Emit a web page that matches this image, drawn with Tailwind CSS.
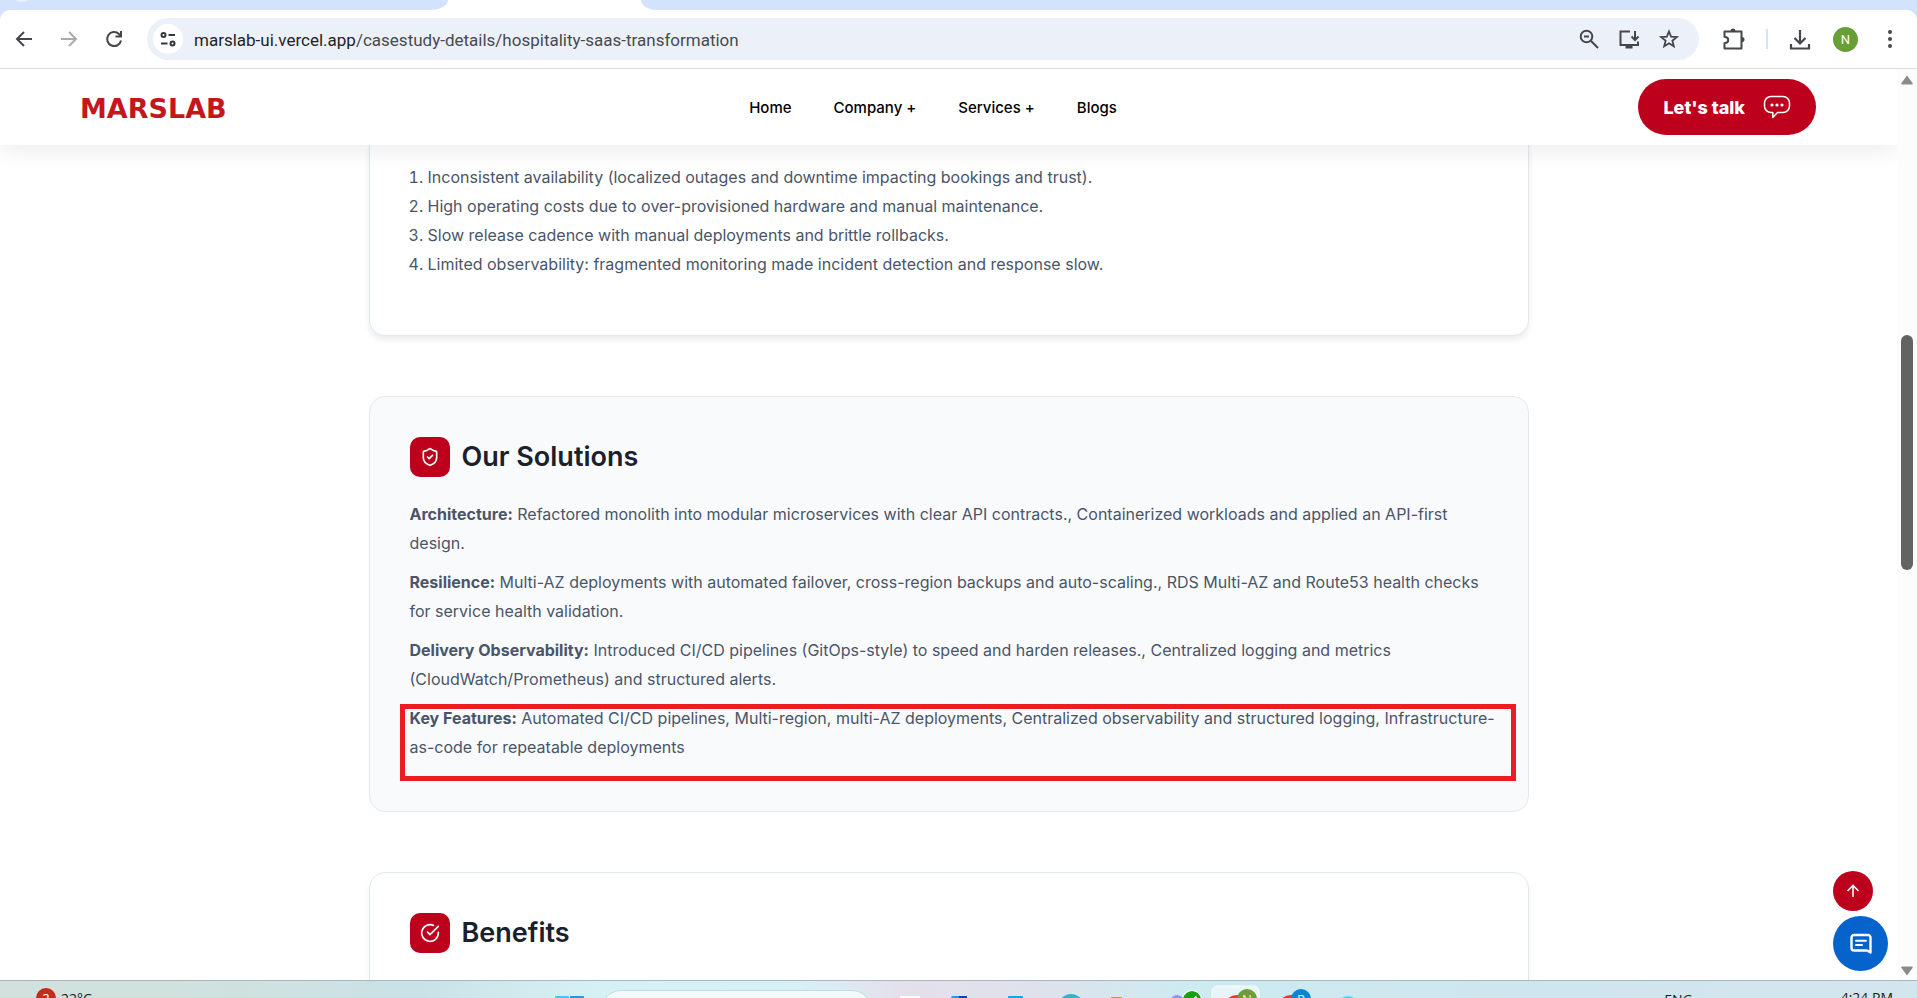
<!DOCTYPE html>
<html lang="en">
<head>
<meta charset="utf-8">
<title>Marslab – Hospitality SaaS transformation</title>
<script src="https://cdn.jsdelivr.net/npm/@tailwindcss/browser@4"></script>
</head>
<body class="h-screen flex flex-col overflow-hidden bg-white font-['Inter',sans-serif] text-[#4a5568]">

<!-- Browser tab strip -->
<div class="shrink-0 bg-white">
  <div class="flex h-[10px] overflow-hidden">
    <div class="w-[448px] bg-[#d3e3fd] rounded-br-[18px_10px]"><div class="ml-[10px] -mt-[22px] size-6 rounded-full bg-[#e9f1fe]"></div></div>
    <div class="w-[193px] bg-white"></div>
    <div class="flex-1 bg-[#d3e3fd] rounded-bl-[16px_10px]"></div>
  </div>
</div>

<!-- Browser toolbar -->
<div class="shrink-0 bg-[#d3e3fd]">
<div class="h-[59px] flex items-center bg-white rounded-t-[10px] border-b border-[#dadce0] text-[#45474a]">
  <button aria-label="Back" class="ml-3 size-6"><svg viewBox="0 0 24 24" fill="none" stroke="currentColor" stroke-width="2"><path d="M20 12H5M12 5l-7 7 7 7"/></svg></button>
  <button aria-label="Forward" class="ml-5 size-6 text-[#a9abad]"><svg viewBox="0 0 24 24" fill="none" stroke="currentColor" stroke-width="2"><path d="M5 12h15M13 5l7 7-7 7"/></svg></button>
  <button aria-label="Reload" class="ml-[22px] size-6"><svg viewBox="0 0 24 24" fill="none" stroke="currentColor" stroke-width="2"><path d="M19 13.500a7 7 0 1 1-2-6.500l2 2M19 4v5.500h-5.500"/></svg></button>
  <div class="ml-[21px] flex-1 h-[42px] rounded-full bg-[#ecf1f9] flex items-center pl-[6px] pr-[18px]">
    <button aria-label="Site information" class="size-[30px] rounded-full bg-white grid place-items-center shrink-0"><svg class="size-[18px]" viewBox="0 0 18 18" fill="none" stroke="#33363a" stroke-width="2"><circle cx="4.500" cy="5" r="2"/><path d="M9.500 5H16M2 13.500h6.500"/><circle cx="13.500" cy="13.500" r="2"/></svg></button>
    <div class="ml-[11px] pt-px flex-1 text-[17px] leading-6 font-['Roboto',sans-serif] text-[#474a4e] whitespace-nowrap"><span class="text-[#1f1f1f]">marslab-ui.vercel.app</span>/casestudy-details/hospitality-saas-transformation</div>
    <div class="flex items-center gap-4">
      <button aria-label="Zoom" class="size-6"><svg viewBox="0 0 24 24" fill="none" stroke="currentColor" stroke-width="2"><circle cx="9.500" cy="9.500" r="5.800"/><path d="M13.800 13.800 21 21M7 9.500h5"/></svg></button>
      <button aria-label="Install app" class="size-6"><svg viewBox="0 0 24 24" fill="none" stroke="currentColor" stroke-width="2"><path d="M13 4.500H3.500v13.500h17.500v-3.500M18 4v9M14.500 9.500 18 13l3.500-3.500"/><path d="M8.500 20h7" stroke-width="3"/></svg></button>
      <button aria-label="Bookmark" class="size-6"><svg viewBox="0 0 24 24" fill="none" stroke="currentColor" stroke-width="1.800"><path d="m12 4.500 2.100 5.200 5.700.4-4.400 3.600 1.400 5.600L12 16.300l-4.800 3 1.400-5.600-4.400-3.600 5.700-.4z"/></svg></button>
    </div>
  </div>
  <button aria-label="Extensions" class="ml-5 size-7"><svg viewBox="0 0 28 28" fill="none" stroke="currentColor" stroke-width="2"><path d="M5.500 6.500h17v17h-17v-5.200c5-.5 5-6.100 0-6.600z" stroke-linejoin="round"/><path d="M11.500 6a2.500 2.500 0 0 1 5 0zM23 12a2.500 2.500 0 0 1 0 5z" fill="currentColor" stroke="none"/></svg></button>
  <div class="ml-[19px] w-[2px] h-5 bg-[#d3e3fd]"></div>
  <button aria-label="Downloads" class="ml-[20px] size-6"><svg viewBox="0 0 24 24" fill="none" stroke="currentColor" stroke-width="2.200"><path d="M12 3v13M6.500 11l5.500 5.500 5.500-5.500M3 17v4.500h18V17"/></svg></button>
  <button aria-label="Profile" class="ml-[21px] size-[25px] rounded-full bg-[#689f38] text-white text-[13px] leading-none font-['Roboto',sans-serif]">N</button>
  <button aria-label="Menu" class="ml-5 mr-[15px] w-6 h-6"><svg viewBox="0 0 24 24" fill="currentColor"><circle cx="12" cy="5" r="2"/><circle cx="12" cy="12" r="2"/><circle cx="12" cy="19" r="2"/></svg></button>
</div>
</div>

<!-- Page viewport -->
<div class="flex-1 min-h-0 flex">
  <div class="flex-1 min-w-0 flex flex-col relative overflow-hidden">
    <header class="relative z-10 shrink-0 h-[76px] flex items-center bg-white shadow-[0_4px_22px_rgba(20,20,60,0.09)] pl-[80px] pr-[81px] text-black">
      <a href="#" class="flex-1 pt-[2px] text-[27px] leading-none font-bold font-['DejaVu_Sans',sans-serif] text-[#c4161c]">MARSLAB</a>
      <nav class="flex gap-[42px] mr-[30px] pt-[2px] text-[15px] leading-6 font-medium">
        <a href="#">Home</a><a href="#">Company +</a><a href="#">Services +</a><a href="#">Blogs</a>
      </nav>
      <div class="flex-1 flex justify-end">
        <button class="h-14 rounded-full bg-[#bd001b] px-[25px] flex items-center gap-[18px] text-white text-[18px] font-extrabold">Let's talk
          <svg class="w-7 h-6" viewBox="0 0 28 24" fill="none" stroke="currentColor" stroke-width="1.500" stroke-linejoin="round"><path d="M8 1.500h12a6.500 6.500 0 0 1 6.500 6.500v3a6.500 6.500 0 0 1-6.500 6.500h-5.500L9.800 22.500v-5H8A6.500 6.500 0 0 1 1.500 11V8A6.500 6.500 0 0 1 8 1.500z"/><g fill="currentColor" stroke="none"><circle cx="9" cy="10" r="1.600"/><circle cx="14" cy="10" r="1.600"/><circle cx="19" cy="10" r="1.600"/></g></svg>
        </button>
      </div>
    </header>

    <main class="w-full max-w-[1160px] mx-auto flex flex-col gap-[60px] text-[16px] leading-[29px]">
      <section class="shrink-0 border border-t-0 border-[#e2e8f0] rounded-b-2xl shadow-[0_4px_6px_rgba(0,0,0,0.08)] px-10 pt-[18px] pb-[56px]">
        <ol class="list-decimal pl-[18px]">
          <li>Inconsistent availability (localized outages and downtime impacting bookings and trust).</li>
          <li>High operating costs due to over-provisioned hardware and manual maintenance.</li>
          <li>Slow release cadence with manual deployments and brittle rollbacks.</li>
          <li>Limited observability: fragmented monitoring made incident detection and response slow.</li>
        </ol>
      </section>

      <section class="shrink-0 border border-[#e2e8f0] rounded-2xl bg-[#f9fafc] pl-10 pr-8 pt-10 pb-[49px]">
        <div class="flex items-center gap-3 mb-[23px]">
          <span class="size-10 rounded-[10px] bg-[#bd001b] grid place-items-center text-white"><svg class="size-5" viewBox="0 0 24 24" fill="none" stroke="currentColor" stroke-width="2" stroke-linecap="round" stroke-linejoin="round"><path d="M20 13c0 5-3.500 7.500-7.660 8.950a1 1 0 0 1-.67-.01C7.500 20.500 4 18 4 13V6a1 1 0 0 1 1-1c2 0 4.500-1.200 6.240-2.720a1.170 1.170 0 0 1 1.520 0C14.510 3.810 17 5 19 5a1 1 0 0 1 1 1z"/><path d="m9 12 2 2 4-4"/></svg></span>
          <h2 class="text-[27px] leading-10 font-semibold text-[#1a202c]">Our Solutions</h2>
        </div>
        <div class="flex flex-col gap-[10px]">
          <p><strong>Architecture:</strong> Refactored monolith into modular microservices with clear API contracts., Containerized workloads and applied an API-first design.</p>
          <p><strong>Resilience:</strong> Multi-AZ deployments with automated failover, cross-region backups and auto-scaling., RDS Multi-AZ and Route53 health checks for service health validation.</p>
          <p><strong>Delivery Observability:</strong> Introduced CI/CD pipelines (GitOps-style) to speed and harden releases., Centralized logging and metrics (CloudWatch/Prometheus) and structured alerts.</p>
          <div class="relative">
            <p><strong>Key Features:</strong> Automated CI/CD pipelines, Multi-region, multi-AZ deployments, Centralized observability and structured logging, Infrastructure-as-code for repeatable deployments</p>
            <div class="absolute top-0 -left-[10px] -right-[20px] h-[77px] border-[5px] border-[#ed1c24]"></div>
          </div>
        </div>
      </section>

      <section class="shrink-0 border border-[#e2e8f0] rounded-2xl shadow-[0_4px_6px_rgba(0,0,0,0.05)] px-10 pt-10 pb-12">
        <div class="flex items-center gap-3">
          <span class="size-10 rounded-[10px] bg-[#bd001b] grid place-items-center text-white"><svg class="size-5" viewBox="0 0 24 24" fill="none" stroke="currentColor" stroke-width="2" stroke-linecap="round" stroke-linejoin="round"><path d="M22 11.080V12a10 10 0 1 1-5.930-9.140"/><path d="m9 11 3 3L22 4"/></svg></span>
          <h2 class="text-[27px] leading-10 font-semibold text-[#1a202c]">Benefits</h2>
        </div>
      </section>
    </main>

    <!-- Floating actions -->
    <div class="absolute right-[9px] bottom-[9px] w-[55px] flex flex-col gap-[5px] z-20">
      <button aria-label="Back to top" class="size-10 rounded-full bg-[#bd001b] text-white grid place-items-center"><svg class="size-5" viewBox="0 0 20 20" fill="none" stroke="currentColor" stroke-width="1.600"><path d="M10 16V4.500M4.500 10 10 4.500l5.500 5.500"/></svg></button>
      <button aria-label="Open chat" class="size-[55px] rounded-full bg-[#0563cb] text-white grid place-items-center"><svg class="size-6" viewBox="0 0 24 24" fill="none" stroke="currentColor" stroke-width="2.400" stroke-linejoin="round" stroke-linecap="round"><path d="M5 3h14a2.500 2.500 0 0 1 2.500 2.500V20.500L18 18.500H5A2.500 2.500 0 0 1 2.500 16V5.500A2.500 2.500 0 0 1 5 3z"/><path d="M7 8.800h10M7 13h6" stroke-width="2"/></svg></button>
    </div>
  </div>

  <!-- Scroll bar -->
  <div class="w-5 shrink-0 bg-[#fcfcfc] flex flex-col items-center pt-[6px] pb-1">
    <svg class="w-3 h-[10px]" viewBox="0 0 12 10" fill="#8b8b8b"><path d="M6 0.500 11.500 8q.8 1.500-.8 1.500H1.300Q-.3 9.500.5 8z"/></svg>
    <div class="mt-[250px] w-3 h-[235px] rounded-full bg-[#636363]"></div>
    <svg class="mt-auto w-3 h-[10px]" viewBox="0 0 12 10" fill="#8b8b8b"><path d="M6 9.500.5 2Q-.3.500 1.300.500h9.400q1.600 0 .8 1.500z"/></svg>
  </div>
</div>

<!-- Desktop taskbar -->
<div class="shrink-0 h-[18px] overflow-hidden border-t border-[#a9b7bd] bg-[linear-gradient(90deg,#d2e1dd_0%,#cfe1de_12%,#c9e2e7_22%,#d6f1f4_31%,#d7f2f6_41%,#e4e0ec_47%,#dfe2ec_54%,#cdebf1_62%,#cfe5ef_80%,#d2e6ee_100%)] flex items-start text-[14px] leading-5 text-[#1b1b1b] font-['Open_Sans',sans-serif]">
  <div class="flex-1 flex items-start pl-9 pt-[7px]">
    <span class="size-5 rounded-full bg-[#c42b1c] text-white text-[13px] leading-5 text-center">2</span>
    <span class="ml-[5px] pt-px">22°C</span>
  </div>
  <div class="flex items-start mr-5">
    <svg class="mt-[15px] w-[29px] h-6" viewBox="0 0 29 24"><rect width="14" height="14" rx="1" fill="#4cc2f1"/><rect x="15" width="14" height="14" rx="1" fill="#2a97dd"/></svg>
    <input aria-label="Search" class="ml-[17px] mt-[9px] w-[271px] h-10 rounded-full border border-[#bcdfe4] bg-[#f3fafc]">
    <svg class="ml-[28px] w-[455px] h-[40px]" viewBox="900 0 455 40" font-family="Open Sans, sans-serif" font-size="13" text-anchor="middle">
      <rect x="900" y="15" width="20" height="25" rx="1" fill="#f8fafc"/>
      <rect x="951" y="15" width="16" height="25" rx="2" fill="#1d9bf0"/><rect x="959" y="15" width="8" height="25" fill="#163fb5"/>
      <rect x="1008" y="15" width="15" height="25" rx="1" fill="#12a5ea"/>
      <circle cx="1071" cy="26" r="13" fill="#2fb7c9"/>
      <rect x="1111" y="16" width="11" height="20" rx="1" fill="#c99a18"/>
      <circle cx="1177" cy="21" r="7" fill="#9a94e8"/><circle cx="1192" cy="19" r="10" fill="#fff"/><circle cx="1192" cy="19" r="9" fill="#13a10e"/><path d="m1187 18 3.500 3.500 6-6" fill="none" stroke="#fff" stroke-width="2"/>
      <rect x="1212" y="5" width="47" height="44" rx="5" fill="#e9f4f8" stroke="#f6fbfc"/>
      <circle cx="1237" cy="28" r="14" fill="#e23b2e"/><circle cx="1247" cy="18" r="10" fill="#689f38"/><text x="1247" y="23" fill="#e8f2de">N</text>
      <circle cx="1291" cy="28" r="14" fill="#e23b2e"/><circle cx="1301" cy="18" r="10" fill="#0b84cf"/><text x="1301" y="23" fill="#e6f3fb">R</text>
      <circle cx="1348" cy="24" r="9" fill="#4fd2ee"/>
    </svg>
  </div>
  <div class="flex-1 flex justify-end items-start pr-6 pt-[7px]">
    <span class="mr-[148px] pt-[2px]">ENG</span><span>4:24 PM</span>
  </div>
</div>
</body>
</html>
